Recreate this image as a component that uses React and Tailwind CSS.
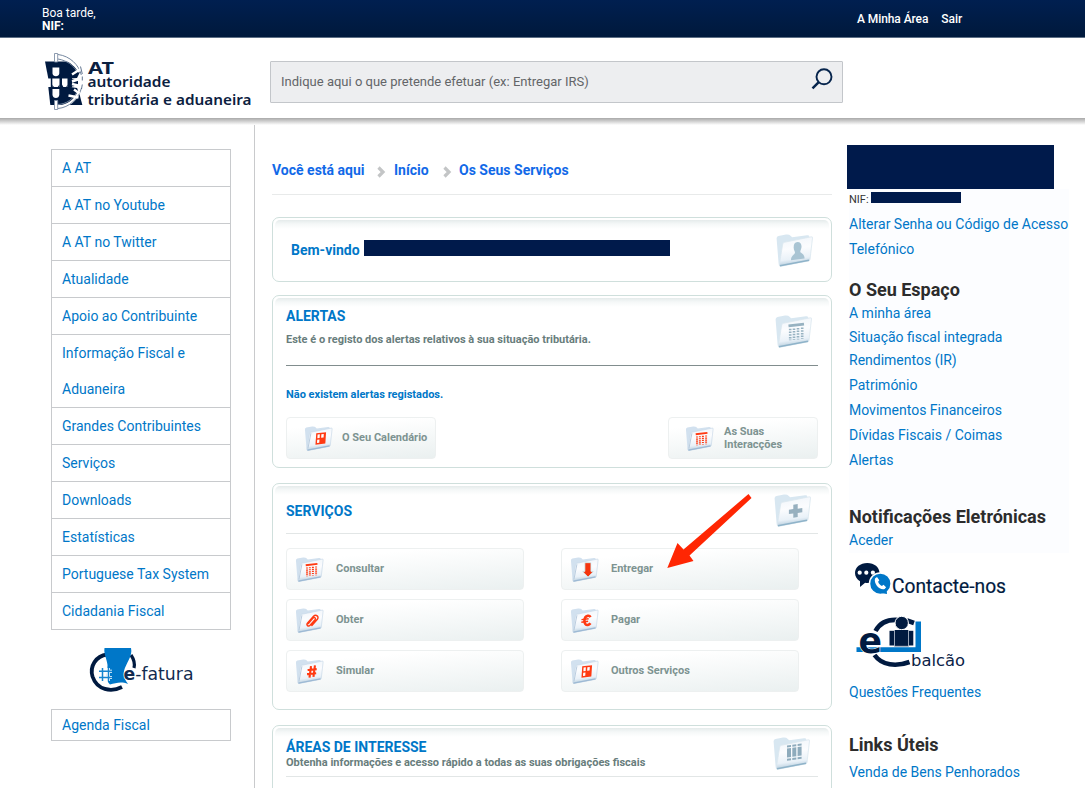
const menu = [
  ["A AT"],
  ["A AT no Youtube"],
  ["A AT no Twitter"],
  ["Atualidade"],
  ["Apoio ao Contribuinte"],
  ["Informação Fiscal e", "Aduaneira"],
  ["Grandes Contribuintes"],
  ["Serviços"],
  ["Downloads"],
  ["Estatísticas"],
  ["Portuguese Tax System"],
  ["Cidadania Fiscal"],
];

const services = [
  ["Consultar", "table"],
  ["Entregar", "down"],
  ["Obter", "clip"],
  ["Pagar", "euro"],
  ["Simular", "hash"],
  ["Outros Serviços", "window"],
];

function Table({ color }) {
  return (
    <g fill="none" stroke={color}>
      <path d="M13.500 10.900 29 9.100" strokeWidth="2.600" />
      <path
        d="M15.200 13.800v11.500M19 13.400v11.500M23 12.900v11.500M27.200 12.500v11.500"
        strokeWidth="2.600"
        strokeDasharray="1.500 1.200"
      />
    </g>
  );
}

function Glyph({ kind }) {
  const red = "#ff3a12";
  const gray = "#97b2c1";
  switch (kind) {
    case "person":
      return (
        <path
          d="M21.500 8c3 0 4.300 2.300 4 5.300-.2 2-1.200 3-1.200 4.500 0 1.400 4.200 1.600 4.300 6.700L15 26.300c0-5 3.800-5.600 4-7.500.1-1.400-1.100-2-1.300-4.800C17.500 10.500 18.500 8 21.500 8Z"
          fill="#a9c4d3"
        />
      );
    case "tableGray":
      return <Table color={gray} />;
    case "table":
      return <Table color={red} />;
    case "plus":
      return <path d="M19.300 10.800l4.400-.7v4.600l4.600-.7v4.200l-4.600.7V23l-4.400.7v-4.300l-4.400.6v-4.300l4.400-.6Z" fill="#97b0bf" />;
    case "columns":
      return (
        <g fill="#8eabbc">
          <path d="M14 8.500l4-.5v2l-4 .5ZM19.300 7.800l4-.5v2l-4 .5ZM24.600 7.100l4-.5v2l-4 .5Z" />
          <path d="M14 11.500l4-.5v9l-4 .5ZM19.300 10.800l4-.5v9l-4 .5ZM24.600 10.100l4-.5v9l-4 .5Z" />
          <path d="M14 21.700l4-.5v2l-4 .5ZM19.300 21l4-.5v2l-4 .5ZM24.600 20.300l4-.5v2l-4 .5Z" />
        </g>
      );
    case "down":
      return (
        <path
          d="M19 7.500h8v11.500h3.200l-7 7.500-7.200-7.500h3Z"
          fill="#f5350f"
          stroke="#cdf3f8"
          strokeWidth="1"
        />
      );
    case "clip":
      return (
        <path
          d="M17 20.500l6.200-7.200c1.800-2 4.300.1 2.600 2.200l-6.500 7.300c-2.400 2.500-5.600-.2-3.300-2.900l7.800-8.900c3.300-3.300 7.800.3 5.100 3.800l-7.300 8.300"
          fill="none"
          stroke={red}
          strokeWidth="1.900"
          strokeLinecap="round"
        />
      );
    case "euro":
      return (
        <g fill="none" stroke={red}>
          <path d="M26.500 12c-1-1.600-2.300-2-3.600-1.700-3 .7-4.500 3.600-4.500 6.800s1.700 5.800 4.500 5.400c1.400-.2 2.500-1 3.500-2.300" strokeWidth="3.400" />
          <path d="M14.500 15.300l9.500-1.200M14.300 18.800l9-1.200" strokeWidth="1.900" />
        </g>
      );
    case "hash":
      return (
        <path
          d="M20.500 9.500l-2 15M25.700 8.500l-2 15M16 14.500l12-1.200M15.300 20l12-1.200"
          fill="none"
          stroke={red}
          strokeWidth="2.800"
        />
      );
    default:
      return (
        <g>
          <path d="M15.500 9.500l13-1.300-1 15-13 1.600Z" fill={red} />
          <path d="M17.300 11.300l3-.3-.3 4.800-3 .3ZM22.300 10.800l3.200-.3-.3 4.800-3.200.3ZM16.800 18l3-.3-.3 4.500-3 .4Z" fill="#fff" />
        </g>
      );
  }
}

function Folder({ kind, small }) {
  return (
    <svg viewBox="0 0 37 33" className={small ? "mt-px -ml-px h-[25px] w-[29px] shrink-0" : "h-[33px] w-[37px] shrink-0"}>
      <defs>
        <linearGradient id={"front-" + kind} x1="0" y1="0" x2="0.15" y2="1">
          <stop offset="0" stopColor="#f0f5fa" />
          <stop offset="0.45" stopColor="#fbfcfe" />
          <stop offset="0.8" stopColor="#e9f1f8" />
          <stop offset="1" stopColor="#b5ccdc" />
        </linearGradient>
      </defs>
      <path
        d="M.6 4.500Q.5 2.600 2.500 2L10 .6Q13.500.3 14.500 1.800L16.200 3.200 31 1.300Q33.500 1 33.300 3L31 25 4 32.300Q2.800 32 2.600 29.500Z"
        fill={small ? "#d2e1ef" : "#d8e7f1"}
      />
      <path
        d="M8.300 8.300 35.300 2.800Q36.700 2.500 36.500 4L34 25.500Q33.800 26.600 32.600 26.900L4.600 32.300Q3 32.400 3.400 30.600L6.700 10Q7 8.600 8.300 8.300Z"
        fill={"url(#front-" + kind + ")"}
        stroke={small ? "#c3d5e6" : "#dbe7ef"}
        strokeWidth="0.8"
      />
      <path d="M4 31.800 33 26.300" fill="none" stroke={small ? "#9db9d4" : "#8fb3c9"} strokeWidth="1.500" />
      {small && <path d="M8.500 9.500 4.600 29.500" fill="none" stroke="#b4c8dc" strokeWidth="1.200" />}
      <Glyph kind={kind} />
    </svg>
  );
}

function Card({ className, children }) {
  return (
    <section className={"w-[560px] shrink-0 rounded-[7px] border border-[#cfdfdc] bg-white p-[2px] " + className}>
      <div className="h-full rounded-[5px] bg-[linear-gradient(to_bottom,#e5ebeb_0,#f5f8f8_4px,#fff_9px)]">{children}</div>
    </section>
  );
}

function Tile({ className, kind, children }) {
  return (
    <div
      className={
        "flex h-[42px] items-center rounded-[4px] border border-[#edf0f0] bg-[linear-gradient(175deg,#fff_20%,#eaf0f0_100%)] pb-px text-[11px] leading-[13px] font-bold text-[#7d9391] " +
        className
      }
    >
      <Folder kind={kind} small />
      {children}
    </div>
  );
}

function AtLogo() {
  return (
    <svg className="h-[60px] w-[212px]" viewBox="44 51 212 60">
      <path d="M45 61.500H68.500L71.500 64 75 67 80 72 77 78 70 78.500H48.300Z" fill="#001a40" />
      <path d="M48.300 87H70L77 88 79.500 94 82.300 105H50.300Z" fill="#001a40" />
      <path d="M50.800 78H52.300V87.500H50.800ZM59.500 78H62V87.500H59.500ZM67.500 78H72V87.500H67.500Z" fill="#001a40" />
      <path d="M71.500 79 78 80.500V85.500L71.500 86.500Z" fill="#001a40" />
      <path d="M52.500 67.500h6.800v6q-.5 2.800-3.400 2.800t-3.400-2.800ZM52.500 89h6.800v6q-.5 3-3.400 3t-3.400-3Z" fill="#fff" />
      <path d="M52.300 84.500q1 3 3.500 3t3.700-3v3.500h-7.200ZM62 84.500q1 3 2.800 3t2.700-3v3.500H62Z" fill="#001a40" />
      <path d="M58 107C68 106 76 100 79.500 91M58 57C68 58.500 76 64 80 72" fill="none" stroke="#fff" strokeWidth="3" />
      <path
        d="M58 54.500C70 56 79 65 81.300 75M58 59C67 60.500 73.500 65.500 76.500 71M81.500 88C78.500 99 69 107.500 58 108.500M77.500 91C73.500 99.500 66 104 58 104.500"
        fill="none"
        stroke="#7688a0"
        strokeWidth="1"
      />
      <path d="M72 74.500 80.500 69M72 81.500 82.500 78M72 84 82.500 86.500M68.500 95.500 78.500 97.500M74 89.500 79.500 93.500" fill="none" stroke="#fff" strokeWidth="2.400" />
      <path d="M80.500 66.500 82.300 74M82.300 76.500V80.500M82.300 84.500 81.500 89" fill="none" stroke="#516783" strokeWidth="0.900" />
      <path d="M54.500 53.500h3.200v8.500h-3.200ZM54.500 100.500h3.200v9h-3.200Z" fill="#fff" stroke="#8090a6" strokeWidth="0.900" />
      <g fill="#0b2040" fontFamily="'Noto Sans', sans-serif" fontWeight="600">
        <text x="88" y="73.500" fontSize="16.500" fontWeight="700" textLength="26" lengthAdjust="spacingAndGlyphs">AT</text>
        <text x="87.500" y="86.500" fontSize="15" textLength="83" lengthAdjust="spacingAndGlyphs">autoridade</text>
        <text x="87.500" y="104.700" fontSize="15" textLength="164" lengthAdjust="spacingAndGlyphs">tributária e aduaneira</text>
      </g>
    </svg>
  );
}

function EFatura() {
  return (
    <svg className="h-[48px] w-[108px]" viewBox="88 646 108 48">
      <path d="M107 654.500C96 656 89.500 666 92.500 676.500 97 690 111 692.500 122 687" fill="none" stroke="#001a40" strokeWidth="3.800" />
      <path d="M131 655C134 659.500 135 664 134 668" fill="none" stroke="#001a40" strokeWidth="3.200" />
      <path d="M104.500 648H131C133 656 126 663 124 671 123 677 125.500 680 128 684 121 681 116 683 110 684.500 105 680 107.500 672 107.500 665 107 659 103.500 654 104.500 648Z" fill="#0077c8" />
      <path d="M99 671.300H112M99 677.500H112M102.500 668V681M108.500 668V681" stroke="#fff" strokeWidth="3" fill="none" />
      <path d="M99 671.300H112M99 677.500H112M102.500 668V681M108.500 668V681" stroke="#1785cf" strokeWidth="1.500" fill="none" />
      <text
        x="123.500"
        y="680"
        fontFamily="'DejaVu Sans', Verdana, sans-serif"
        fontSize="17.500"
        fill="#122b50"
        textLength="70"
        lengthAdjust="spacingAndGlyphs"
      >
        <tspan fontWeight="700" stroke="#fff" strokeWidth="1.500" paintOrder="stroke">e</tspan>-fatura
      </text>
    </svg>
  );
}

function Contact() {
  return (
    <svg className="h-[42px] w-[160px]" viewBox="852 560 160 42">
      <path d="M867.300 563c7 0 12.200 4.300 12.200 10s-5.200 10-12.200 10c-.8 0-1.500 0-2.200-.2L860 587v-5.800c-3-1.800-5-4.800-5-8.200 0-5.700 5.300-10 12.300-10Z" fill="#001a40" />
      <g fill="#fff">
        <circle cx="859.700" cy="572.700" r="2.100" />
        <circle cx="866.300" cy="572.700" r="2.100" />
        <circle cx="872.900" cy="572.700" r="2.100" />
      </g>
      <circle cx="880.300" cy="583.700" r="10.800" fill="#0077c8" stroke="#fff" strokeWidth="1.500" />
      <path d="M881 593 887 594 886.500 588Z" fill="#0077c8" />
      <path d="M875 578.500l2-1.500 2.300 3.200-1.200 1.500c.8 2 2 3.400 3.800 4.200l1.600-1.200 2.600 2.500-1.500 1.800c-5 1.500-11-5-9.600-10.500Z" fill="#fff" />
      <text x="892" y="593" fontFamily="Roboto, sans-serif" fontSize="20" fontWeight="400" fill="#001a40" stroke="#001a40" strokeWidth="0.200" textLength="114" lengthAdjust="spacingAndGlyphs">Contacte-nos</text>
    </svg>
  );
}

function EBalcao() {
  return (
    <svg className="h-[58px] w-[114px]" viewBox="854 614 114 58">
      <path d="M856.500 647.200h64.500v4.800h-64.500ZM915.500 621.500h5.500v30h-5.500Z" fill="#0077c8" />
      <path d="M875.500 631C880 622.500 888 619 899 620M907 620.500 914 623M874.500 655C882 665.500 896 667 909.500 662" fill="none" stroke="#001a40" strokeWidth="4.600" />
      <circle cx="901.700" cy="623" r="6.700" fill="#001a40" stroke="#fff" strokeWidth="1" />
      <path d="M889.500 630.800h23.800v14.700h-23.800Z" fill="#001a40" />
      <path d="M894.500 630v16.300h14V630" fill="#001a40" stroke="#aab6c6" strokeWidth="0.900" />
      <text x="858.500" y="653" fontFamily="'DejaVu Sans', Verdana, sans-serif" fontWeight="700" fontSize="36" fill="#001a40" stroke="#fff" strokeWidth="1.200" paintOrder="stroke" textLength="23.500" lengthAdjust="spacingAndGlyphs">e</text>
      <text x="911" y="666" fontFamily="'DejaVu Sans', Verdana, sans-serif" fontSize="16" fill="#0b2347" textLength="54" lengthAdjust="spacingAndGlyphs">balcão</text>
    </svg>
  );
}

function Chevron() {
  return (
    <svg className="h-[12px] w-[9px] translate-y-px" viewBox="0 0 9 12">
      <path d="M1.500 1.500 6 6 1.500 10.500" fill="none" stroke="#c3c5c6" strokeWidth="3.200" />
    </svg>
  );
}

export default function App() {
  return (
    <div className="relative flex h-[788px] w-[1085px] flex-col overflow-hidden bg-white font-['Roboto',sans-serif] text-[14px] text-[#0077c8]">
      <div className="flex h-[38px] shrink-0 items-start border-b border-[#5d6f86] bg-gradient-to-b from-[#001f50] to-[#00193c] text-[12px] text-white">
        <div className="w-[815px] pt-[7px] pl-[42px] leading-[13px]">
          <div>Boa tarde,</div>
          <div className="font-bold">NIF:</div>
        </div>
        <div className="flex gap-[13px] pt-[12px] pl-[42px] leading-[14px] font-medium tracking-[-0.08px]">
          <span>A Minha Área</span>
          <span>Sair</span>
        </div>
      </div>
      <header className="flex h-[80px] shrink-0 items-start">
        <div className="w-[270px] pt-[13px] pl-[44px]">
          <AtLogo />
        </div>
        <div className="mt-[23px] flex h-[42px] w-[573px] items-center justify-between rounded-[1px] border border-[#c3c6ca] bg-[#edeef0] pr-[9px] pl-[10px] text-[13px] text-[#636568]">
          <span>Indique aqui o que pretende efetuar (ex: Entregar IRS)</span>
          <svg className="-mt-[6px] h-[22px] w-[22px]" viewBox="0 0 22 22">
            <circle cx="13" cy="8.800" r="7.500" fill="none" stroke="#06244c" strokeWidth="1.900" />
            <path d="M7.500 14.300 1.500 20.300" stroke="#06244c" strokeWidth="2.400" />
          </svg>
        </div>
      </header>
      <div className="h-[7px] shrink-0 bg-gradient-to-b from-[#a9a9a9] to-white" />
      <div className="flex min-h-0 flex-1">
        <aside className="h-full w-[255px] shrink-0 border-r border-[#c9cacc] pt-[24px] pl-[51px]">
          <ul className="w-[180px] border border-[#c8cacd]">
            {menu.map((lines) => (
              <li key={lines[0]} className="border-b border-[#c8cacd] pl-[10px] leading-[36px] last:border-b-0">
                {lines.map((line) => (
                  <div key={line}>{line}</div>
                ))}
              </li>
            ))}
          </ul>
          <div className="flex h-[79px] items-start pt-[16px] pl-[37px]">
            <EFatura />
          </div>
          <div className="h-[32px] w-[180px] border border-[#c8cacd] pl-[10px] leading-[31px]">Agenda Fiscal</div>
        </aside>

        <main className="flex w-[592px] shrink-0 flex-col pl-[17px]">
          <nav className="flex h-[70px] w-[560px] shrink-0 items-center border-b border-[#e8eaea] pt-[22px] font-bold text-[#1169e8]">
            <span className="w-[105px]">Você está aqui</span>
            <span className="w-[17px]"><Chevron /></span>
            <span className="w-[49px]">Início</span>
            <span className="w-[16px]"><Chevron /></span>
            <span>Os Seus Serviços</span>
          </nav>

          <Card className="mt-[22px] h-[65px]">
            <div className="flex h-full items-center pl-[16px]">
              <b className="pt-[2px]">Bem-vindo</b>
              <span className="-mt-[3px] ml-[4px] h-[16px] w-[306px] bg-[#001a4b]" />
              <span className="ml-auto pt-px pr-[16px]"><Folder kind="person" /></span>
            </div>
          </Card>

          <Card className="mt-[13px] h-[173px]">
            <div className="px-[11px]">
              <div className="flex h-[68px] justify-between border-b border-[#818d8e]">
                <div>
                  <h2 className="pt-[9px] leading-[18px] font-bold">ALERTAS</h2>
                  <p className="pt-[7px] text-[11px] leading-[16px] font-bold text-[#687d7c]">
                    Este é o registo dos alertas relativos à sua situação tributária.
                  </p>
                </div>
                <div className="pt-[17px] pr-[6px]"><Folder kind="tableGray" /></div>
              </div>
              <p className="pt-[21px] text-[11px] leading-[16px] font-bold">Não existem alertas registados.</p>
              <div className="mt-[14px] flex justify-between">
                <Tile kind="window" className="w-[150px] gap-[9px] pl-[18px]">O Seu Calendário</Tile>
                <Tile kind="table" className="w-[150px] gap-[10px] pl-[17px]">
                  <span className="pt-px">As Suas<br />Interacções</span>
                </Tile>
              </div>
            </div>
          </Card>

          <Card className="mt-[15px] h-[227px]">
            <div className="px-[11px]">
              <div className="flex h-[48px] justify-between border-b border-[#e2e6e6]">
                <h2 className="pt-[16px] leading-[18px] font-bold">SERVIÇOS</h2>
                <div className="pt-[8px] pr-[7px]"><Folder kind="plus" /></div>
              </div>
              <div className="mt-[14px] grid grid-cols-[238px_238px] gap-x-[37px] gap-y-[9px]">
                {services.map(([name, kind]) => (
                  <Tile key={name} kind={kind} className="gap-[12px] pl-[9px]">{name}</Tile>
                ))}
              </div>
            </div>
          </Card>

          <Card className="mt-[15px] h-[100px]">
            <div className="px-[11px]">
              <div className="flex h-[49px] justify-between border-b border-[#e2e6e6]">
                <div>
                  <h2 className="pt-[10px] leading-[18px] font-bold">ÁREAS DE INTERESSE</h2>
                  <p className="text-[11px] leading-[13px] font-bold text-[#687d7c]">
                    Obtenha informações e acesso rápido a todas as suas obrigações fiscais
                  </p>
                </div>
                <div className="pt-[9px] pr-[8px]"><Folder kind="columns" /></div>
              </div>
            </div>
          </Card>
        </main>

        <aside className="w-[238px] pt-[20px]">
          <div className="h-[44px] w-[207px] bg-[#001a4b]" />
          <div className="ml-[2px] w-[220px]">
            <div className="h-[364px] bg-[#fcfdff]">
              <div className="flex h-[23px] items-start pt-[3px] text-[11px] leading-[14px] text-[#333]">
                <span className="pt-px">NIF:</span>
                <span className="ml-[2px] h-[11px] w-[90px] bg-[#001a4b]" />
              </div>
              <div className="leading-[25px] whitespace-nowrap">
                Alterar Senha ou Código de Acesso
                <br />
                Telefónico
              </div>
              <h2 className="mt-[17px] text-[18px] leading-[22px] font-bold text-[#2c2c2c]">O Seu Espaço</h2>
              <div className="leading-[24px]">
                <div>A minha área</div>
                <div>Situação fiscal integrada</div>
                <div className="-mt-px mb-px">Rendimentos (IR)</div>
              </div>
              <div className="leading-[25px]">
                <div>Património</div>
                <div>Movimentos Financeiros</div>
                <div>Dívidas Fiscais / Coimas</div>
                <div>Alertas</div>
              </div>
              <h2 className="mt-[33px] text-[18px] leading-[22px] font-bold whitespace-nowrap text-[#2c2c2c]">Notificações Eletrónicas</h2>
              <div className="leading-[24px]">Aceder</div>
            </div>
            <div className="pt-[7px] pl-[3px]"><Contact /></div>
            <div className="pt-[12px] pl-[5px]"><EBalcao /></div>
            <div className="mt-[8px] leading-[24px]">Questões Frequentes</div>
            <h2 className="mt-[30px] text-[18px] leading-[22px] font-bold text-[#2c2c2c]">Links Úteis</h2>
            <div className="mt-[4px] leading-[24px]">Venda de Bens Penhorados</div>
          </div>
        </aside>
      </div>

      <svg className="pointer-events-none absolute top-[490px] left-[662px] h-[82px] w-[94px]" viewBox="662 490 94 82">
        <path d="M748.500 494 751.500 498 689.500 555.500 693.500 561 667.300 568 677.500 543 683.500 549.500Z" fill="#ff2603" />
      </svg>
    </div>
  );
}
